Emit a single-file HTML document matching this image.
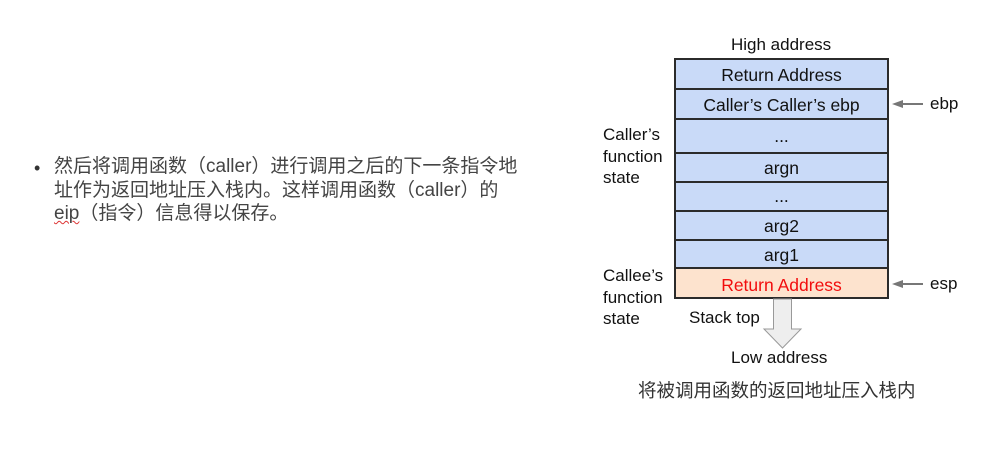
<!DOCTYPE html>
<html><head><meta charset="utf-8"><style>
body{margin:0;width:983px;height:465px;background:#fff;position:relative;overflow:hidden;font-family:"Liberation Sans",Arial,sans-serif;}
.a{position:absolute;white-space:nowrap;}
.r{position:absolute;left:674px;width:215px;border:2px solid #2b2b2b;box-sizing:border-box;background:#c9daf8;text-align:center;font-size:17.5px;color:#111;}
.t{position:absolute;font-family:"Liberation Sans","Noto Sans CJK SC",sans-serif;font-size:19px;color:#444;line-height:23.5px;white-space:nowrap;}
.l{position:absolute;font-size:17px;line-height:21.5px;color:#111;}
</style></head><body>
<div class="a" style="left:34px;top:158px;font-size:18px;color:#333;">•</div>
<div class="t" style="left:54px;top:155px;">然后将调用函数（caller）进行调用之后的下一条指令地<br>址作为返回地址压入栈内。这样调用函数（caller）的<br><span style="text-decoration:underline wavy #d33;text-decoration-thickness:1px;">eip</span>（指令）信息得以保存。</div>

<div class="a" style="left:731px;top:35px;font-size:17px;color:#111;">High address</div>
<div class="r" style="top:58px;height:32px;line-height:30px;">Return Address</div>
<div class="r" style="top:88px;height:32px;line-height:30px;">Caller’s Caller’s ebp</div>
<div class="r" style="top:118px;height:36px;line-height:32px;">...</div>
<div class="r" style="top:152px;height:31px;line-height:29px;">argn</div>
<div class="r" style="top:181px;height:31px;line-height:27px;">...</div>
<div class="r" style="top:210px;height:31px;line-height:29px;">arg2</div>
<div class="r" style="top:239px;height:30px;line-height:28px;">arg1</div>
<div class="r" style="top:267px;height:32px;line-height:32px;background:#fde3ce;color:#f20d0d;">Return Address</div>

<div class="l" style="left:603px;top:124px;">Caller’s<br>function<br>state</div>
<div class="l" style="left:603px;top:265px;">Callee’s<br>function<br>state</div>

<svg class="a" style="left:890px;top:95px" width="40" height="200">
<line x1="6" y1="9" x2="33" y2="9" stroke="#777" stroke-width="2"/><path d="M2 9 L13 5 L13 13Z" fill="#777"/>
<line x1="6" y1="189" x2="33" y2="189" stroke="#777" stroke-width="2"/><path d="M2 189 L13 185 L13 193Z" fill="#777"/>
</svg>
<div class="a" style="left:930px;top:94px;font-size:17px;color:#111;">ebp</div>
<div class="a" style="left:930px;top:274px;font-size:17px;color:#111;">esp</div>

<svg class="a" style="left:760px;top:298px" width="50" height="52">
<path d="M13.5 1 L31.5 1 L31.5 31 L41 31 L22.5 50 L4 31 L13.5 31Z" fill="#eeeeee" stroke="#999" stroke-width="1"/>
</svg>
<div class="a" style="left:689px;top:308px;font-size:17px;color:#111;">Stack top</div>
<div class="a" style="left:731px;top:348px;font-size:17px;color:#111;">Low address</div>
<div class="a" style="left:638px;top:377px;font-size:18.5px;color:#333;font-family:'Noto Sans CJK SC',sans-serif;">将被调用函数的返回地址压入栈内</div>
</body></html>
